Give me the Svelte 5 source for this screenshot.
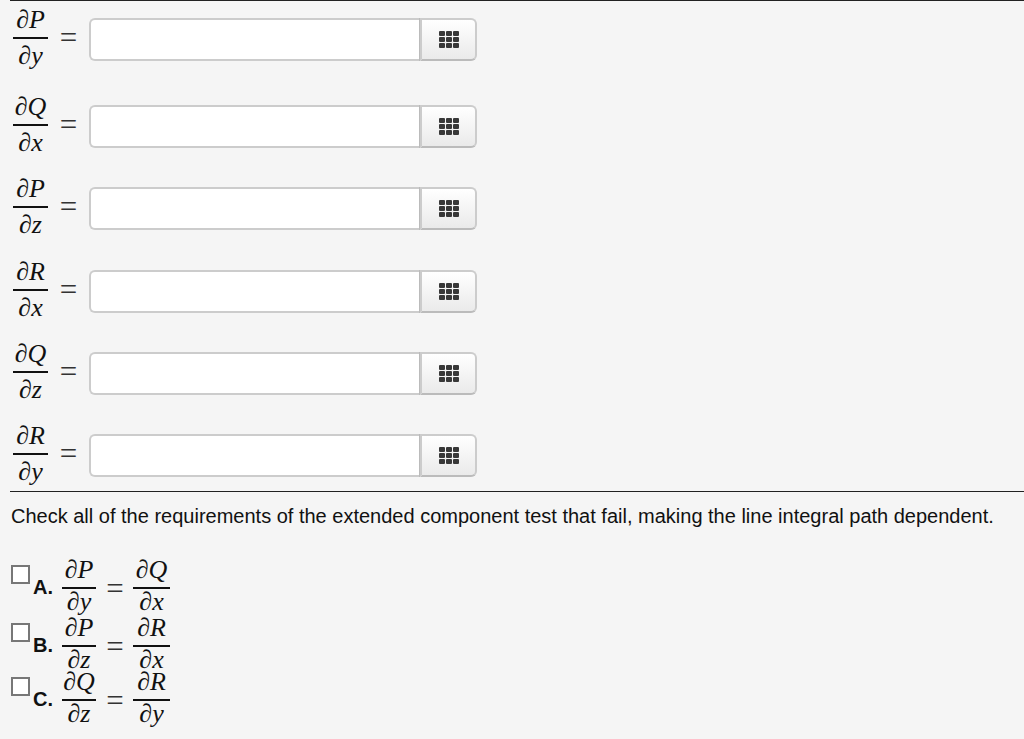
<script>
  const rows = [
    { n: 'P', d: 'y', gap: 87 },
    { n: 'Q', d: 'x', gap: 82 },
    { n: 'P', d: 'z', gap: 83 },
    { n: 'R', d: 'x', gap: 82 },
    { n: 'Q', d: 'z', gap: 82 },
    { n: 'R', d: 'y', gap: 57 }
  ];
  const options = [
    { label: 'A.', a: ['P', 'y'], b: ['Q', 'x'], h: 58 },
    { label: 'B.', a: ['P', 'z'], b: ['R', 'x'], h: 54 },
    { label: 'C.', a: ['Q', 'z'], b: ['R', 'y'], h: 58 }
  ];
  const cells = [0, 1, 2].flatMap((r) => [0, 1, 2].map((c) => [c * 7, r * 6]));
</script>

{#snippet frac(n, d)}
  <span class="frac">
    <span class="num">∂<i>{n}</i></span>
    <span class="den">∂<i>{d}</i></span>
  </span>
{/snippet}

<main>
  <section class="rows">
    {#each rows as row}
      <div class="row" style="height: {row.gap}px">
        {@render frac(row.n, row.d)}
        <span class="eq">=</span>
        <div class="field">
          <div class="input"></div>
          <div class="btn">
            <svg width="20" height="17" viewBox="0 0 20 17">
              {#each cells as [x, y]}
                <rect {x} {y} width="6" height="5" rx="1" fill="#383838" />
              {/each}
            </svg>
          </div>
        </div>
      </div>
    {/each}
  </section>
  <p class="prompt">Check all of the requirements of the extended component test that fail, making the line integral path dependent.</p>
  <section class="options">
    {#each options as o}
      <div class="option" style="height: {o.h}px">
        <span class="box"></span>
        <b>{o.label}</b>
        {@render frac(o.a[0], o.a[1])}
        <span class="eq">=</span>
        {@render frac(o.b[0], o.b[1])}
      </div>
    {/each}
  </section>
</main>

<style>
  :global(body) {
    margin: 0;
    background: #f5f5f5;
  }
  main {
    height: 739px;
    overflow: hidden;
    color: #111;
    font-family: "Liberation Sans", Arial, sans-serif;
  }
  .rows {
    margin-left: 10px;
    border-top: 1px solid #222;
    border-bottom: 1px solid #222;
    height: 490px;
  }
  .row {
    display: flex;
    align-items: flex-start;
    padding-left: 3px;
  }
  .frac {
    display: inline-flex;
    flex-direction: column;
    align-items: stretch;
    width: 35px;
    text-align: center;
    white-space: nowrap;
    font-family: "Liberation Serif", "Times New Roman", serif;
    font-size: 26px;
    line-height: 28px;
    padding-top: 5px;
  }
  .frac i {
    font-style: italic;
  }
  .num {
    border-bottom: 2px solid #111;
    height: 31px;
  }
  .den {
    height: 28px;
    padding-top: 3px;
  }
  .eq {
    font-family: "Liberation Serif", "Times New Roman", serif;
    font-size: 31px;
    line-height: 34px;
    width: 41px;
    text-align: center;
    color: #333;
    font-weight: 400;
    padding-top: 20px;
  }
  .field {
    display: flex;
    width: 388px;
    height: 43px;
    margin-top: 17px;
  }
  .input {
    flex: 1;
    box-sizing: border-box;
    background: #fff;
    border: 2px solid #ccc;
    border-right: 0;
    border-radius: 6px 0 0 6px;
  }
  .btn {
    width: 57px;
    box-sizing: border-box;
    display: flex;
    align-items: center;
    justify-content: center;
    border: 2px solid #ccc;
    border-bottom-color: #bbb;
    border-radius: 0 6px 6px 0;
    background: linear-gradient(#fff, #eaeaea);
    box-shadow: -1px 0 0 #bbb;
  }
  .prompt {
    margin: 13px 0 0 11px;
    font-size: 20px;
    line-height: 22px;
    white-space: nowrap;
  }
  .options {
    margin-top: 31px;
    padding-left: 11px;
  }
  .option {
    display: flex;
    align-items: flex-start;
  }
  .option .frac {
    padding-top: 0;
    margin-top: -2px;
    width: 34px;
  }
  .option .frac:last-child {
    width: 37px;
  }
  .option .num {
    height: 31px;
  }
  .option .den {
    padding-top: 0;
    margin-top: -1px;
  }
  .option .eq {
    width: 36px;
    padding: 14px 0 0 1px;
  }
  .box {
    width: 19px;
    height: 19px;
    flex: none;
    box-sizing: border-box;
    margin-top: 7px;
    background: #fff;
    border: 2px solid #777;
  }
  b {
    font-size: 20px;
    line-height: 22px;
    margin: 18px 9px 0 3px;
    width: 20px;
  }
</style>
